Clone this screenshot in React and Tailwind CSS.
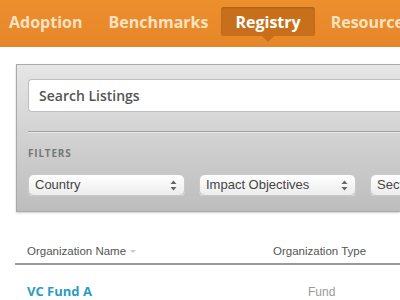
import React from 'react'

const navItems = ['Adoption', 'Benchmarks', 'Registry', 'Resources']

const Chevrons = () => (
  <svg width="7" height="11" viewBox="0 0 7 11" className="shrink-0">
    <path d="M3.5 0.5 L6.5 4 L0.5 4 Z" fill="#666" />
    <path d="M3.5 10.5 L6.5 7 L0.5 7 Z" fill="#666" />
  </svg>
)

const Select = ({ label, width }) => (
  <div
    className={`${width} h-[22px] shrink-0 flex items-center justify-between pl-[6px] pr-[7px] rounded-[6px] border border-[#c9c9c9] bg-gradient-to-b from-white to-[#ececec] shadow-[0_1px_0_rgba(255,255,255,0.6)]`}
  >
    <span className="text-[13px] text-[#444] font-['Liberation_Sans',sans-serif] whitespace-nowrap">{label}</span>
    <Chevrons />
  </div>
)

const App = () => {
  return (
    <div className="w-[400px] h-[300px] overflow-hidden bg-white font-['Open_Sans',sans-serif]">
      <nav className="h-[47px] bg-gradient-to-b from-[#ec8f2c] to-[#e6862a] flex items-start pl-[9px] gap-[26px] whitespace-nowrap overflow-hidden">
        {navItems.map((item) =>
          item === 'Registry' ? (
            <div key={item} className="relative mt-[7px] -ml-[13px] -mr-[10px]">
              <div className="h-[29px] px-[14px] flex items-center rounded-[3px] bg-[#c86f1c] shadow-[inset_0_1px_2px_rgba(0,0,0,0.15)] text-white text-[16px] font-bold">
                {item}
              </div>
              <div className="absolute left-1/2 -translate-x-1/2 top-[29px] w-0 h-0 border-l-[6px] border-r-[6px] border-t-[6px] border-l-transparent border-r-transparent border-t-[#c86f1c]" />
            </div>
          ) : (
            <span key={item} className="mt-[10px] text-[16px] font-bold text-[#fde2c2]">
              {item}
            </span>
          )
        )}
      </nav>

      <div className="mt-[17px] ml-[16px] h-[148px] border border-[#a9a9a9] border-r-0 bg-gradient-to-b from-[#e6e6e6] to-[#bdbdbd] pl-[11px] pt-[14px] shadow-[0_1px_2px_rgba(0,0,0,0.2)]">
        <div className="h-[33px] bg-white rounded-l-[4px] border border-[#bfbfbf] border-r-0 flex items-center pl-[10px]">
          <span className="text-[14px] font-semibold text-[#555]">Search Listings</span>
        </div>
        <div className="mt-[19px] border-t border-[#9f9f9f] shadow-[0_1px_0_rgba(255,255,255,0.5)]" />
        <div className="mt-[14px] text-[10px] font-bold tracking-[0.08em] text-[#777]">FILTERS</div>
        <div className="mt-[13px] flex gap-[14px] overflow-hidden">
          <Select label="Country" width="w-[157px]" />
          <Select label="Impact Objectives" width="w-[157px]" />
          <Select label="Sector" width="w-[157px]" />
        </div>
      </div>

      <div className="mt-[30px] ml-[15px] font-['Liberation_Sans',sans-serif]">
        <div className="h-[23px] pt-[1px] flex items-start border-b-2 border-[#999]">
          <div className="w-[258px] pl-[12px] text-[11.5px] text-[#555] flex items-center gap-[4px]">
            Organization Name
            <svg width="6" height="4" viewBox="0 0 6 4">
              <path d="M0 0 L6 0 L3 3 Z" fill="#ccc" />
            </svg>
          </div>
          <div className="text-[11.5px] text-[#555]">Organization Type</div>
        </div>
        <div className="flex items-center h-[30px] mt-[12px]">
          <div className="w-[293px] pl-[12px] text-[13px] font-bold text-[#2b9cc4] font-['Open_Sans',sans-serif]">VC Fund A</div>
          <div className="text-[12px] text-[#999]">Fund</div>
        </div>
      </div>
    </div>
  )
}

export default App
